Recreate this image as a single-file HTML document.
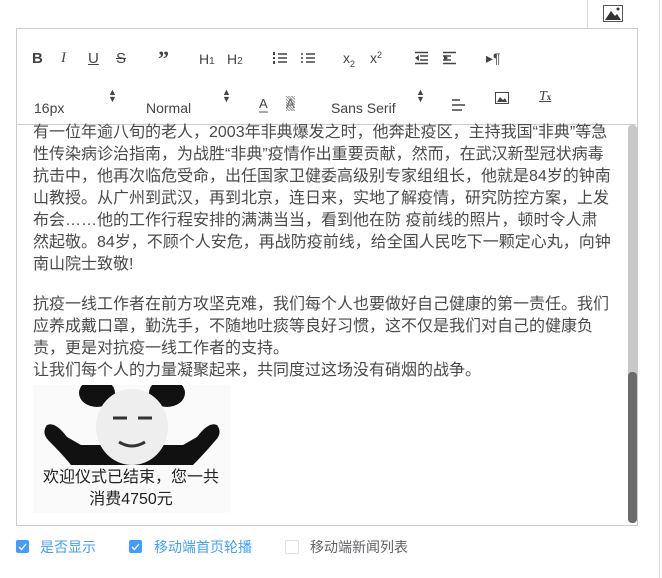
<!DOCTYPE html>
<html><head><meta charset="utf-8"><style>
body{margin:0;width:662px;height:578px;background:#fff;overflow:hidden;position:relative;font-family:"Liberation Sans","Noto Sans CJK SC",sans-serif;}
.abs{position:absolute}
.tb{font-family:"Liberation Sans",sans-serif;color:#444;font-size:14px}
.txt{left:33px;font-size:16px;color:#4a4a4a;white-space:nowrap;line-height:22px;font-family:"Liberation Sans","Noto Sans CJK SC",sans-serif;}
.cb{width:13px;height:13px;border-radius:2px;top:540px}
.lab{top:537px;font-size:14px}
</style></head><body>
<div class="abs" style="left:587px;top:0;width:50px;height:28px;border-left:1px solid #ddd;border-bottom:1px solid #ddd"></div>
<svg class="abs" style="left:603px;top:5px" width="20" height="17" viewBox="0 0 20 17"><rect x="0.5" y="0.5" width="19" height="16" fill="#fff" stroke="#555"/><path d="M2 15 L8 6 L12 11 L14 9 L18 15Z" fill="#333"/><circle cx="15" cy="4" r="1.5" fill="#333"/></svg>
<div class="abs" style="left:659px;top:0;width:1px;height:578px;background:#ddd"></div>
<div class="abs" style="left:16px;top:28px;width:620px;height:496px;border:1px solid #ccc"></div>
<div class="abs" style="left:17px;top:124px;width:619px;height:1px;background:#ccc"></div>
<div class="abs tb" style="left:32px;top:50px;font-size:15px;font-weight:bold">B</div>
<div class="abs tb" style="left:61px;top:50px;font-size:15px;font-style:italic;font-family:'Liberation Serif',serif">I</div>
<div class="abs tb" style="left:88px;top:50px;font-size:15px;text-decoration:underline">U</div>
<div class="abs tb" style="left:116px;top:50px;font-size:15px;text-decoration:line-through">S</div>
<div class="abs tb" style="left:158px;top:46px;font-size:22px;font-weight:bold;font-family:'Liberation Serif',serif">”</div>
<div class="abs tb" style="left:199px;top:51px;font-size:14px">H<span style="font-size:10px">1</span></div>
<div class="abs tb" style="left:227px;top:51px;font-size:14px">H<span style="font-size:10px">2</span></div>
<svg class="abs" style="left:272px;top:51px" width="44" height="14"><g stroke="#444" stroke-width="1.5"><path d="M6 3h9M6 7h9M6 11h9M34 3h9M34 7h9M34 11h9"/></g><g fill="#444"><rect x="1" y="1" width="2" height="3"/><rect x="1" y="6" width="2" height="2"/><rect x="1" y="10" width="2" height="3"/><circle cx="30" cy="3" r="1"/><circle cx="30" cy="7" r="1"/><circle cx="30" cy="11" r="1"/></g></svg>
<div class="abs tb" style="left:343px;top:50px;font-size:14px">x<span style="font-size:9px;position:relative;top:4px">2</span></div>
<div class="abs tb" style="left:370px;top:50px;font-size:14px">x<span style="font-size:9px;position:relative;top:-5px">2</span></div>
<svg class="abs" style="left:414px;top:51px" width="44" height="14"><g stroke="#444" stroke-width="1.5"><path d="M1 1.5h13M6 5h8M6 9h8M1 12.5h13M29 1.5h13M29 5h8M29 9h8M29 12.5h13"/></g><path d="M5 4L1 7L5 10Z" fill="#444"/><path d="M30 4L34 7L30 10Z" fill="#444"/></svg>
<div class="abs tb" style="left:486px;top:50px;font-size:14px">▸¶</div>
<div class="abs tb" style="left:34px;top:100px;font-size:14px">16px</div>
<div class="abs tb" style="left:108px;top:89px;font-size:9px;line-height:7px">▲<br>▼</div>
<div class="abs tb" style="left:146px;top:100px;font-size:14px">Normal</div>
<div class="abs tb" style="left:222px;top:89px;font-size:9px;line-height:7px">▲<br>▼</div>
<div class="abs tb" style="left:259px;top:96px;font-size:13px;border-bottom:2px solid #aaa;line-height:15px">A</div>
<div class="abs tb" style="left:286px;top:96px;font-size:13px;color:#666;background:repeating-linear-gradient(45deg,#999 0 1px,#fff 1px 2px);line-height:15px">A</div>
<div class="abs tb" style="left:331px;top:100px;font-size:14px">Sans Serif</div>
<div class="abs tb" style="left:416px;top:89px;font-size:9px;line-height:7px">▲<br>▼</div>
<svg class="abs" style="left:452px;top:99px" width="14" height="12"><g stroke="#444" stroke-width="1.5"><path d="M0 1h8M0 6h13M0 11h10"/></g></svg>
<svg class="abs" style="left:495px;top:92px" width="14" height="12"><rect x="0.5" y="0.5" width="13" height="11" fill="none" stroke="#444"/><path d="M2 10L5 5L8 8L10 6L12 10Z" fill="#444"/></svg>
<div class="abs tb" style="left:539px;top:89px;font-size:14px;font-style:italic;text-decoration:underline;font-family:'Liberation Serif',serif">T<span style="font-size:9px;font-style:normal;font-weight:bold">x</span></div>
<div class="abs txt" style="top:122px">有一位年逾八旬的老人，2003年非典爆发之时，他奔赴疫区，主持我国“非典”等急<br>性传染病诊治指南，为战胜“非典”疫情作出重要贡献，然而，在武汉新型冠状病毒<br>抗击中，他再次临危受命，出任国家卫健委高级别专家组组长，他就是84岁的钟南<br>山教授。从广州到武汉，再到北京，连日来，实地了解疫情，研究防控方案，上发<br>布会……他的工作行程安排的满满当当，看到他在防 疫前线的照片，顿时令人肃<br>然起敬。84岁，不顾个人安危，再战防疫前线，给全国人民吃下一颗定心丸，向钟<br>南山院士致敬!</div>
<div class="abs txt" style="top:294px">抗疫一线工作者在前方攻坚克难，我们每个人也要做好自己健康的第一责任。我们<br>应养成戴口罩，勤洗手，不随地吐痰等良好习惯，这不仅是我们对自己的健康负<br>责，更是对抗疫一线工作者的支持。<br>让我们每个人的力量凝聚起来，共同度过这场没有硝烟的战争。</div>
<svg class="abs" style="left:33px;top:385px" width="197" height="128" viewBox="0 0 197 128">
<rect width="197" height="128" fill="#fafafa"/>
<ellipse cx="64" cy="8" rx="18" ry="14" fill="#111"/>
<ellipse cx="134" cy="8" rx="18" ry="14" fill="#111"/>
<path d="M14 40 Q8 48 16 56 Q30 70 38 80 L160 80 Q170 70 182 56 Q190 48 184 40 Q176 36 164 52 L150 60 L48 60 L34 52 Q22 36 14 40Z" fill="#111"/>
<ellipse cx="99" cy="42" rx="36" ry="38" fill="#eeeeee"/>
<path d="M80 33h14M105 33h14M86 57q13 8 26 0" stroke="#333" stroke-width="3" fill="none"/>
<text x="98" y="97" text-anchor="middle" font-size="16" fill="#222" font-family="Liberation Sans,Noto Sans CJK SC,sans-serif">欢迎仪式已结束，您一共</text>
<text x="98" y="119" text-anchor="middle" font-size="16" fill="#222" font-family="Liberation Sans,Noto Sans CJK SC,sans-serif">消费4750元</text>
</svg>
<div class="abs" style="left:628px;top:125px;width:9px;height:398px;background:#c8c8c8;border-radius:4px"></div>
<div class="abs" style="left:628px;top:372px;width:9px;height:151px;background:#6b6b6b;border-radius:4px"></div>
<div class="abs cb" style="left:16px;background:#409eff"><svg width="13" height="13"><path d="M3 7l2.5 2.5L10 4" stroke="#fff" stroke-width="1.3" fill="none"/></svg></div>
<div class="abs lab" style="left:40px;color:#409eff">是否显示</div>
<div class="abs cb" style="left:129px;background:#409eff"><svg width="13" height="13"><path d="M3 7l2.5 2.5L10 4" stroke="#fff" stroke-width="1.3" fill="none"/></svg></div>
<div class="abs lab" style="left:154px;color:#409eff">移动端首页轮播</div>
<div class="abs cb" style="left:285px;border:1px solid #dcdfe6;width:12px;height:12px"></div>
<div class="abs lab" style="left:310px;color:#606266">移动端新闻列表</div>
</body></html>
